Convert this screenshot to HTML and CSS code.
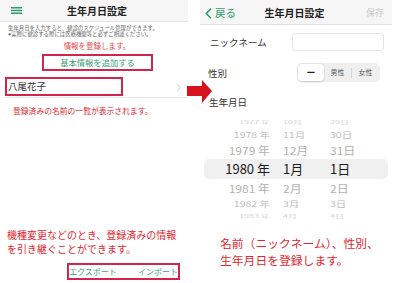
FILE: index.html
```html
<!DOCTYPE html>
<html lang="ja">
<head>
<meta charset="utf-8">
<title>生年月日設定</title>
<link rel="stylesheet" href="styles.css">
</head>
<body>
<div class="stage">
  <section class="screen screen-left">
    <header class="bar bar-left">
      <div class="bar-side">
        <svg class="menu" width="11" height="7" viewBox="0 0 11 7"><path d="M0 0.7H11M0 3.5H11M0 6.3H11" stroke="#2f9a6b" stroke-width="1.4"/></svg>
      </div>
      <h1 class="title">生年月日設定</h1>
      <div class="bar-side"></div>
    </header>
    <div class="notes">
      <p class="note-line">生年月日を入力すると、健診のスケジュール管理ができます。</p>
      <p class="note-line">●実際に健診する際には医療機関等と必ずご相談ください。</p>
    </div>
    <p class="anno anno-center">情報を登録します。</p>
    <div class="add-btn mark">基本情報を追加する</div>
    <div class="list-item">
      <span class="name mark">八尾花子</span>
      <svg class="chev" width="4" height="7" viewBox="0 0 4 7"><polyline points="0.5,0.5 3.4,3.5 0.5,6.5" fill="none" stroke="#c4c4c4" stroke-width="0.9"/></svg>
    </div>
    <p class="anno anno-list">登録済みの名前の一覧が表示されます。</p>
    <div class="spacer"></div>
    <p class="anno anno-big">機種変更などのとき、登録済みの情報<br>を引き継ぐことができます。</p>
    <div class="io mark"><span>エクスポート</span><span>インポート</span></div>
  </section>

  <section class="screen screen-right">
    <header class="bar bar-right">
      <div class="bar-side back">
        <svg width="7" height="11" viewBox="0 0 7 11"><polyline points="6,0.8 1.3,5.5 6,10.2" fill="none" stroke="#2f9a6b" stroke-width="1.6"/></svg>
        <span>戻る</span>
      </div>
      <h1 class="title">生年月日設定</h1>
      <div class="bar-side save">保存</div>
    </header>
    <div class="form-row row-nick">
      <span class="label">ニックネーム</span>
      <span class="input"></span>
    </div>
    <div class="form-row row-sex">
      <span class="label">性別</span>
      <div class="seg">
        <span class="seg-item seg-on">ー</span>
        <span class="seg-item">男性</span>
        <span class="seg-sep"></span>
        <span class="seg-item">女性</span>
      </div>
    </div>
    <div class="form-row row-birth"><span class="label">生年月日</span></div>
    <div class="picker">
      <div class="prow r3 top"><div class="pin"><span class="y">1977 年</span><span class="m">10月</span><span class="d">29日</span></div></div>
      <div class="prow r2"><div class="pin"><span class="y">1978 年</span><span class="m">11月</span><span class="d">30日</span></div></div>
      <div class="prow r1"><div class="pin"><span class="y">1979 年</span><span class="m">12月</span><span class="d">31日</span></div></div>
      <div class="prow r0"><div class="pin"><span class="y">1980 年</span><span class="m">1月</span><span class="d">1日</span></div></div>
      <div class="prow r1"><div class="pin"><span class="y">1981 年</span><span class="m">2月</span><span class="d">2日</span></div></div>
      <div class="prow r2"><div class="pin"><span class="y">1982 年</span><span class="m">3月</span><span class="d">3日</span></div></div>
      <div class="prow r3 bottom"><div class="pin"><span class="y">1983 年</span><span class="m">4月</span><span class="d">4日</span></div></div>
    </div>
    <p class="anno anno-right">名前（ニックネーム）、性別、<br>生年月日を登録します。</p>
  </section>

  <svg class="arrow" width="26" height="24" viewBox="0 0 26 24"><polygon points="0,6 15,6 15,0 25,11 15,23 15,16 0,16" fill="#d5121d"/></svg>
</div>
</body>
</html>
```

FILE: styles.css
```css
* { box-sizing: border-box; margin: 0; padding: 0; }

html, body { background: #fff; }

body {
  margin: 0;
  font-family: "Noto Sans CJK JP", "Noto Sans", sans-serif;
  color: #333;
}

.stage {
  position: relative;
  width: 400px;
  height: 283px;
  overflow: hidden;
  display: flex;
  gap: 6px;
}

.screen {
  display: flex;
  flex-direction: column;
  height: 283px;
}

.screen-left { width: 194px; }
.screen-right { width: 192px; }

/* nav bars */
.bar {
  display: grid;
  grid-template-columns: 1fr auto 1fr;
  align-items: center;
  background: #f6f6f6;
  border-bottom: 1px solid #e2e2e2;
}

.bar-left {
  width: 188px;
  height: 22px;
  padding-left: 6px;
}

.bar-right {
  height: 25px;
  padding: 2px 8px 0 5px;
}

.title {
  font-size: 10px;
  font-weight: 700;
  line-height: 14px;
  color: #222;
}

.bar-side { display: flex; align-items: center; }

.menu { margin-left: 5px; display: block; }

.back { gap: 3px; color: #2f9a6b; font-size: 10.5px; line-height: 14px; }
.back svg { display: block; }

.save {
  justify-content: flex-end;
  font-size: 9px;
  line-height: 14px;
  color: #c9c9c9;
}

/* left screen */
.notes {
  margin-top: 3px;
  padding-left: 8px;
  display: flex;
  flex-direction: column;
  font-family: "Liberation Sans", "Noto Sans CJK JP", sans-serif;
}

.note-line {
  height: 6px;
  font-size: 5.4px;
  line-height: 6px;
  color: #666;
  white-space: nowrap;
}

.anno { color: #e3262f; white-space: nowrap; }

.anno-center {
  margin-top: 4px;
  text-align: center;
  font-size: 7.5px;
  line-height: 10px;
  color: #e4444c;
}

.mark { border: 2px solid #d3244b; }

.add-btn {
  margin: 3px 0 0 42px;
  width: 111px;
  height: 17px;
  text-align: center;
  font-size: 8.3px;
  line-height: 13px;
  color: #3c9f7c;
}

.list-item {
  margin: 6px 0 0 5px;
  width: 183px;
  height: 21px;
  display: flex;
  align-items: flex-start;
  border-bottom: 1px solid #e6e6e6;
}

.name {
  width: 118px;
  height: 19px;
  padding-left: 1px;
  font-size: 9.5px;
  line-height: 15px;
  color: #333;
}

.chev { margin: 7px 7px 0 auto; display: block; }

.anno-list {
  margin-top: 8px;
  padding-left: 13px;
  font-size: 7.8px;
  line-height: 10px;
}

.spacer { flex: 1; }

.anno-big {
  padding-left: 7px;
  font-size: 10px;
  line-height: 14px;
}

.io {
  margin: 7px 0 3px 67px;
  width: 113px;
  height: 17px;
  display: flex;
  justify-content: space-between;
  font-size: 8px;
  line-height: 13px;
  color: #3c9f7c;
}

/* right screen */
.form-row {
  display: flex;
  align-items: center;
}

.label {
  font-size: 9.5px;
  line-height: 14px;
  color: #333;
}

.row-nick { margin-top: 8px; height: 18px; padding-left: 10px; }
.row-sex { margin-top: 12px; height: 19px; padding-left: 8px; }
.row-birth { margin-top: 13px; height: 14px; padding-left: 9px; }

.input {
  margin-left: auto;
  margin-right: 8px;
  width: 92px;
  height: 18px;
  border: 1px solid #e6e6e6;
  border-radius: 3px;
  background: #fff;
}

.seg {
  margin-left: auto;
  margin-right: 12px;
  width: 83px;
  height: 19px;
  padding: 1px;
  display: flex;
  align-items: center;
  background: #efeff0;
  border-radius: 5px;
}

.seg-item {
  flex: 1;
  text-align: center;
  font-size: 7px;
  line-height: 17px;
  color: #555;
}

.seg-on {
  flex: 0 0 26px;
  height: 17px;
  background: #fff;
  border-radius: 4px;
  box-shadow: 0 0.5px 2px rgba(0,0,0,0.18);
  font-size: 9px;
  font-weight: 700;
  color: #222;
}

.seg-sep {
  width: 1px;
  height: 10px;
  background: #d4d4d4;
}

/* picker wheel */
.picker {
  margin: 9px 4px 0 4px;
  width: 184px;
  display: flex;
  flex-direction: column;
}

.prow {
  overflow: hidden;
  display: flex;
  align-items: center;
}

.pin {
  width: 100%;
  display: flex;
  align-items: center;
  white-space: nowrap;
}

.y { width: 66px; margin-right: 13px; text-align: right; }
.m { width: 47px; }

.r0 {
  height: 20px;
  background: #f0f0f1;
  border-radius: 5px;
  font-size: 13px;
  line-height: 18px;
  color: #1b1b1b;
}

.r1 { height: 18px; font-size: 12px; line-height: 16px; color: #b2b2b2; }
.r1 .pin { transform: scaleY(0.9); }

.r2 { height: 13px; font-size: 10.5px; line-height: 14px; color: #bdbdbd; }
.r2 .pin { transform: scaleY(0.78); }

.r3 { height: 10px; font-size: 9px; line-height: 12px; color: #d3d3d3; }
.r3 .pin { transform: scaleY(0.5); }
.r3.top { align-items: flex-end; }
.r3.bottom { align-items: flex-start; }

.anno-right {
  margin-top: 14px;
  padding-left: 20px;
  font-size: 11.8px;
  line-height: 17px;
}

.arrow {
  position: absolute;
  left: 187px;
  top: 80px;
  display: block;
}
```
